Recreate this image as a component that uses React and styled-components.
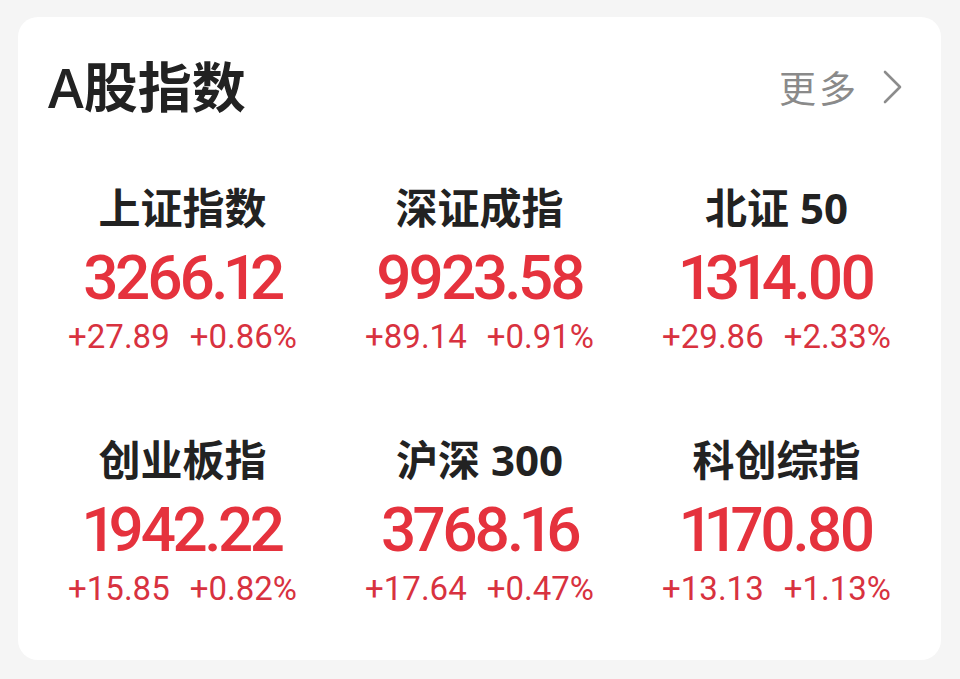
import React from 'react';
import styled, { createGlobalStyle } from 'styled-components';

const indices = [
  { name: '上证指数', value: '3266.12', change: '+27.89', pct: '+0.86%' },
  { name: '深证成指', value: '9923.58', change: '+89.14', pct: '+0.91%' },
  { name: '北证 50', value: '1314.00', change: '+29.86', pct: '+2.33%' },
  { name: '创业板指', value: '1942.22', change: '+15.85', pct: '+0.82%' },
  { name: '沪深 300', value: '3768.16', change: '+17.64', pct: '+0.47%' },
  { name: '科创综指', value: '1170.80', change: '+13.13', pct: '+1.13%' },
];

export default function App() {
  return (
    <>
      <GlobalStyle />
      <Card>
        <Header>
          <Title>A股指数</Title>
          <More>
            更多
            <svg width="20" height="34" viewBox="0 0 20 34" fill="none">
              <path d="M2 2 L17 17 L2 32" stroke="#8c8c8c" strokeWidth="2.6" strokeLinecap="round" strokeLinejoin="round" />
            </svg>
          </More>
        </Header>
        <Grid>
          {indices.map((item) => (
            <Cell key={item.name}>
              <Name>{item.name}</Name>
              <Value>{item.value}</Value>
              <Change>
                <span>{item.change}</span>
                <span>{item.pct}</span>
              </Change>
            </Cell>
          ))}
        </Grid>
      </Card>
    </>
  );
}

const GlobalStyle = createGlobalStyle`
  html, body {
    margin: 0;
    padding: 0;
    background: #f5f5f5;
  }
  body {
    font-family: "Noto Sans CJK SC", "Noto Sans", sans-serif;
  }
`

const Card = styled.div`
  box-sizing: border-box;
  margin: 17px 19px 0 18px;
  height: 643px;
  padding: 35px 16px 0;
  background: #fff;
  border-radius: 20px;
`

const Header = styled.div`
  display: flex;
  justify-content: space-between;
  align-items: center;
  height: 70px;
  padding: 0 22px 0 14px;
`

const Title = styled.div`
  font-family: "Open Sans", "Noto Sans CJK SC", sans-serif;
  font-size: 54px;
  line-height: 1;
  font-weight: 600;
  color: #222;
`

const More = styled.div`
  display: flex;
  align-items: center;
  gap: 24px;
  font-size: 37px;
  line-height: 1;
  color: #8a8a8a;
  letter-spacing: 3px;
`

const Grid = styled.div`
  display: grid;
  grid-template-columns: repeat(3, 1fr);
  row-gap: 78px;
  margin-top: 61px;
`

const Cell = styled.div`
  display: flex;
  flex-direction: column;
  align-items: center;
`

const Name = styled.div`
  font-family: "Open Sans", "Noto Sans CJK SC", sans-serif;
  font-size: 42px;
  line-height: 50px;
  font-weight: 700;
  color: #222;
`

const Value = styled.div`
  margin-top: 15px;
  font-family: Roboto, "Liberation Sans", sans-serif;
  font-variant-numeric: proportional-nums;
  font-size: 62px;
  line-height: 60px;
  font-weight: 500;
  color: #e5323d;
  letter-spacing: -3.5px;
`

const Change = styled.div`
  display: flex;
  gap: 20px;
  margin-top: 9px;
  font-family: Roboto, "Liberation Sans", sans-serif;
  font-size: 33px;
  line-height: 40px;
  font-weight: 400;
  color: #d8323f;
`
